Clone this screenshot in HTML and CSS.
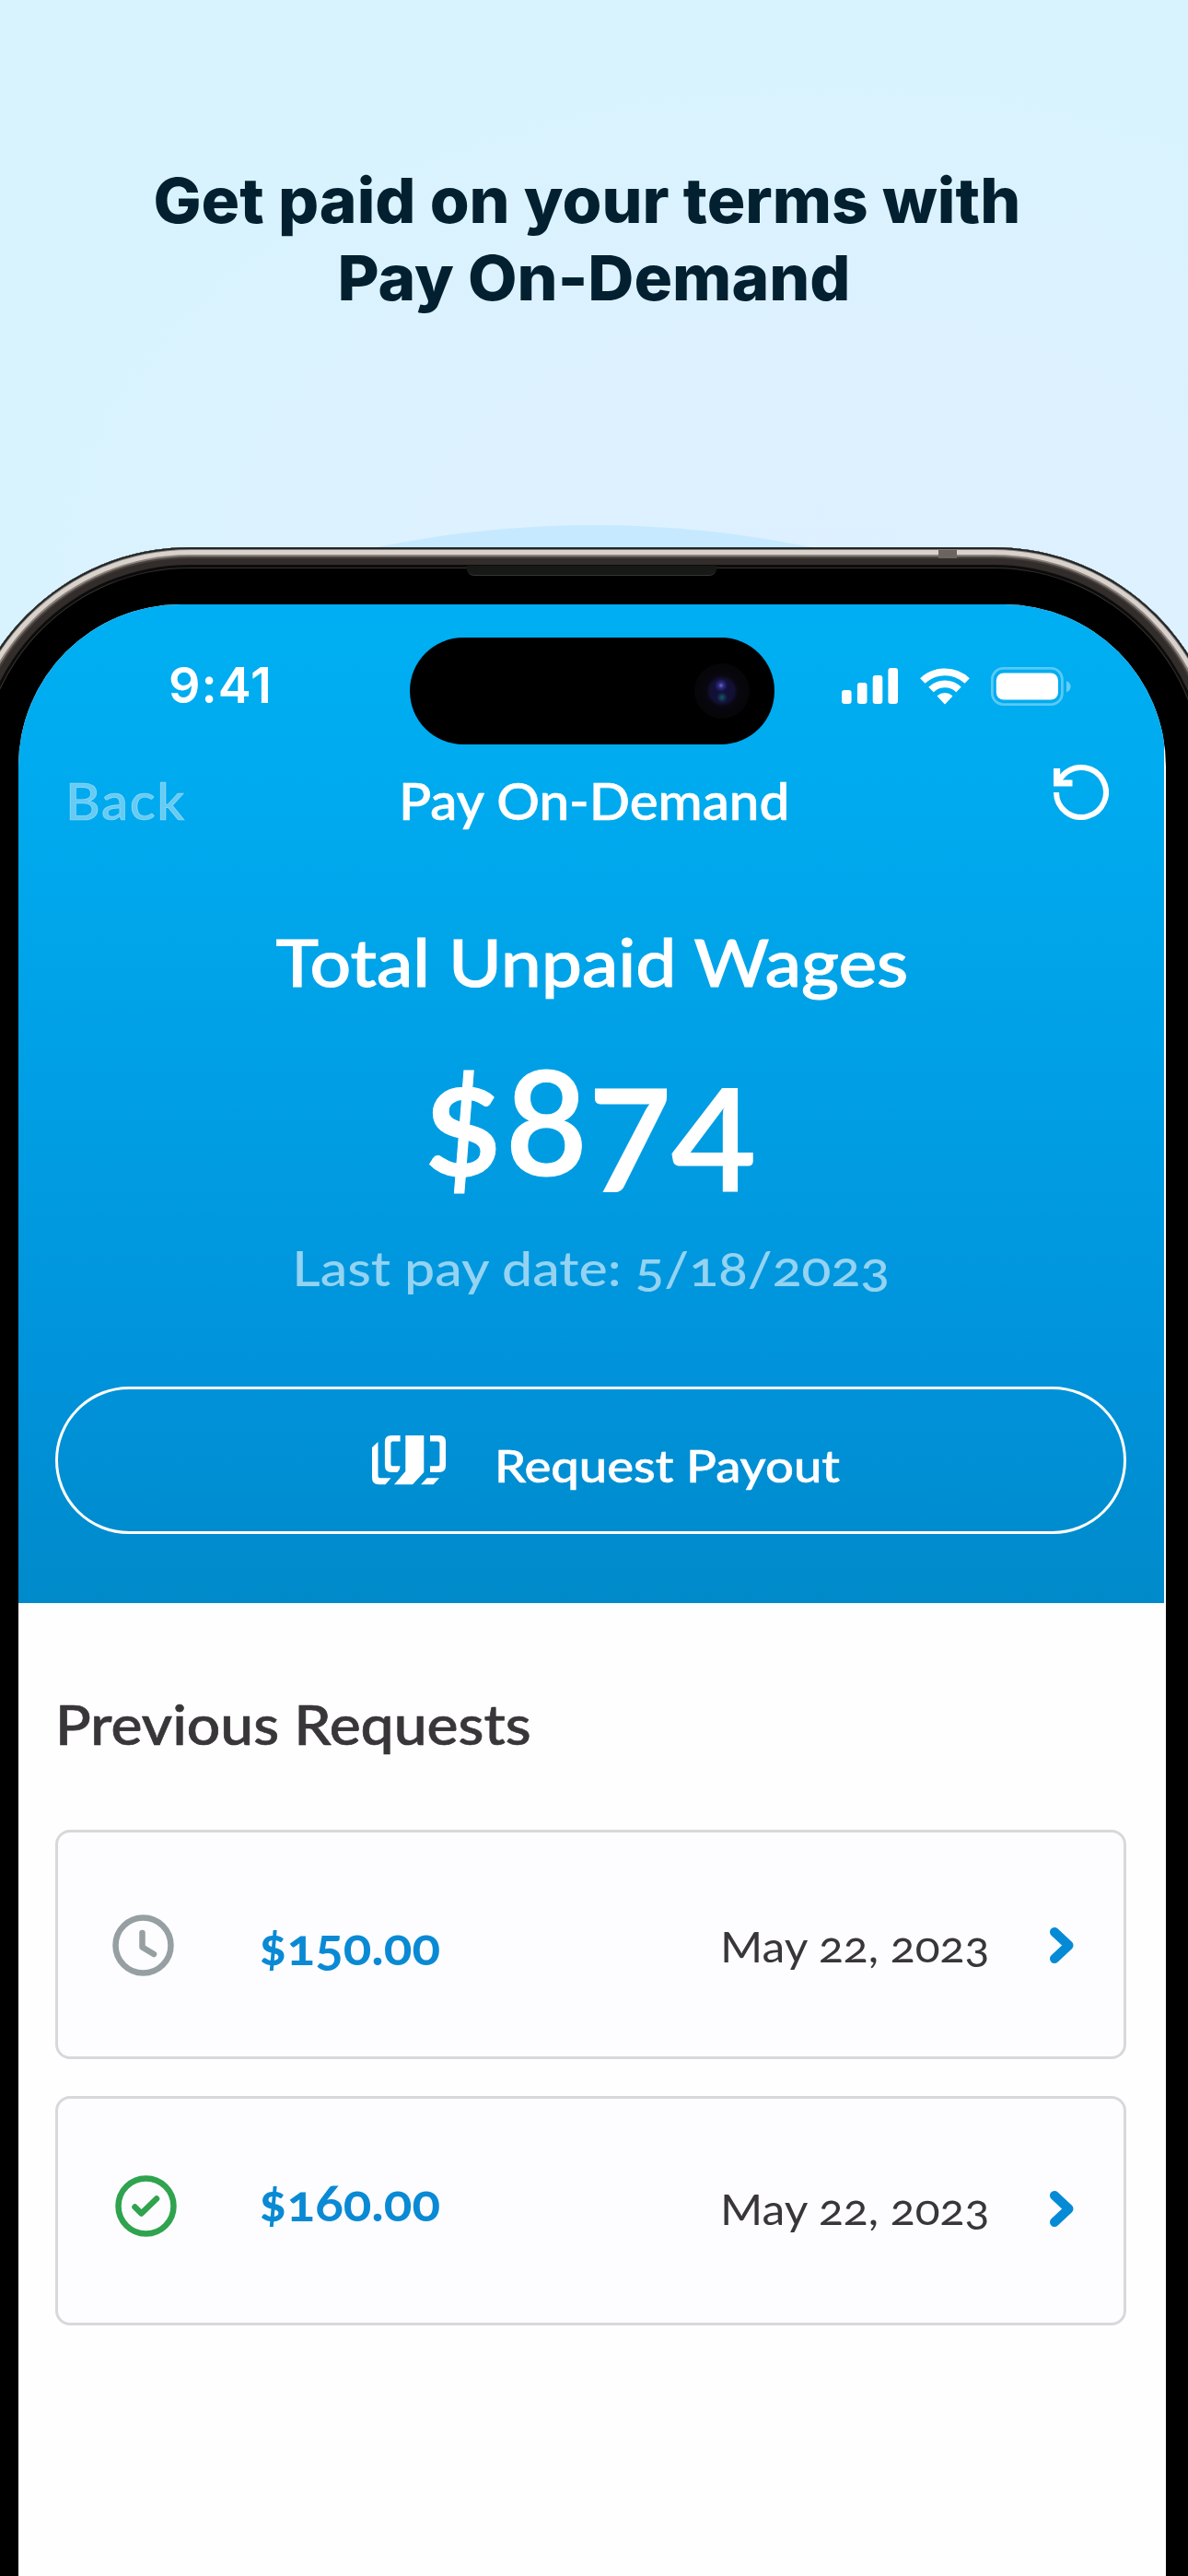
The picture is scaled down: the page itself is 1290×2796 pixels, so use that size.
FILE: index.html
```html
<!DOCTYPE html>
<html lang="en">
<head>
  <meta charset="UTF-8">
  <meta name="viewport" content="width=device-width, initial-scale=1.0">
  <title>Pay On-Demand</title>
  <link rel="stylesheet" href="styles.css">
</head>
<body>
  <div class="promo">
    <h1 class="headline">
      <span class="line-one">Get paid on your terms with</span>
      <span class="line-two">Pay On-Demand</span>
    </h1>

    <div class="glow"></div>

    <div class="phone">
      <div class="antenna"></div>
      <div class="speaker"></div>

      <div class="screen">
        <!-- blue header -->
        <div class="hero">
          <div class="status-bar">
            <span class="time">9:41</span>
            <div class="island">
              <div class="camera"></div>
            </div>
            <div class="status-icons">
              <svg class="signal" width="61" height="39" viewBox="0 0 61 39" fill="#fff">
                <rect x="0" y="24" width="10.6" height="15" rx="3"/>
                <rect x="16.9" y="16" width="10.6" height="23" rx="3"/>
                <rect x="33.7" y="8" width="10.6" height="31" rx="3"/>
                <rect x="50.4" y="0" width="10.6" height="39" rx="3"/>
              </svg>
              <svg class="wifi" width="54" height="40" viewBox="0 0 54 40" fill="none" stroke="#fff">
                <path d="M2.8 14A35 35 0 0 1 51.2 14" stroke-width="7.8"/>
                <path d="M12 23.5A21.4 21.4 0 0 1 42 23.5" stroke-width="7.8"/>
                <path d="M27 38.5L19.5 30.5A11.5 11.5 0 0 1 34.5 30.5Z" fill="#fff" stroke-width="1.5" stroke-linejoin="round"/>
              </svg>
              <svg class="battery" width="87" height="42" viewBox="0 0 87 42">
                <rect x="1.4" y="1.4" width="76" height="39.2" rx="12" fill="none" stroke="#fff" stroke-opacity=".35" stroke-width="2.8"/>
                <rect x="5.8" y="6.5" width="67.2" height="29" rx="8" fill="#fff"/>
                <path d="M82 15Q86.6 17 86.6 21.3T82 27.5Z" fill="#fff" fill-opacity=".4"/>
              </svg>
            </div>
          </div>

          <div class="nav">
            <a class="back"><span>Back</span></a>
            <div class="nav-title"><span>Pay On-Demand</span></div>
            <svg class="refresh" width="60" height="60" viewBox="0 0 60 60" fill="none" stroke="#fff">
              <path d="M3 30A27 27 0 1 0 11.5 10.3Q8 13.5 5.5 18.5" stroke-width="6"/>
              <path d="M3.6 4V20H20.5" stroke-width="7.2"/>
            </svg>
          </div>

          <h2 class="wages-label">Total Unpaid Wages</h2>
          <div class="wages">$874</div>
          <div class="pay-date">Last pay date: 5/18/2023</div>

          <button class="payout">
            <svg width="80" height="54" viewBox="0 0 80 54" fill="#fff">
              <path d="M0 13L6.5 7V44Q6.5 46.3 9 46.3H20.5L14.5 53.3H7Q0 53.3 0 46Z"/>
              <path d="M30.6 0H21Q13.9 0 13.9 7V33Q13.9 40 21 40H27.5Q30.6 37 30.6 33.3H22.4Q20.4 33.3 20.4 31.3V8.5Q20.4 6.5 22.4 6.5H30.6Z"/>
              <path d="M36.3 0H56.3V40L44 53.3H24L36.3 39Z"/>
              <path d="M63 0H73Q80 0 80 7V33Q80 40 73 40H63V33.3H71.4Q73.4 33.3 73.4 31.3V8.5Q73.4 6.5 71.4 6.5H63Z"/>
              <path d="M53 53.3L59.6 46.3H73L66.5 53.3Z"/>
            </svg>
            <span>Request Payout</span>
          </button>
        </div>

        <!-- request list -->
        <div class="requests">
          <h3>Previous Requests</h3>

          <div class="request pending">
            <svg class="state" width="67" height="67" viewBox="0 0 67 67" fill="none" stroke="#969fa2" stroke-width="6.5" stroke-linecap="round" stroke-linejoin="round">
              <circle cx="33.5" cy="33.5" r="30"/>
              <path d="M32.5 20V35.5L45 43"/>
            </svg>
            <span class="amount">$150.00</span>
            <span class="date">May 22, 2023</span>
            <svg class="chevron" width="28" height="41" viewBox="0 0 28 41" fill="none" stroke="#058bd6" stroke-width="10" stroke-linecap="round" stroke-linejoin="round">
              <path d="M6 6L21.5 20.5L6 35"/>
            </svg>
          </div>

          <div class="request done">
            <svg class="state" width="67" height="67" viewBox="0 0 67 67" fill="none" stroke="#2fa34e" stroke-width="6.5" stroke-linecap="round" stroke-linejoin="round">
              <circle cx="33.5" cy="33.5" r="30"/>
              <path d="M21.5 34.5L28.5 41.5L45 25.5"/>
            </svg>
            <span class="amount">$160.00</span>
            <span class="date">May 22, 2023</span>
            <svg class="chevron" width="28" height="41" viewBox="0 0 28 41" fill="none" stroke="#058bd6" stroke-width="10" stroke-linecap="round" stroke-linejoin="round">
              <path d="M6 6L21.5 20.5L6 35"/>
            </svg>
          </div>
        </div>
      </div>
    </div>
  </div>
</body>
</html>
```
FILE: styles.css
```css
* {
  box-sizing: border-box;
}

body {
  margin: 0;
  font-family: Lato, "Liberation Sans", sans-serif;
  font-variant-numeric: oldstyle-nums;
}

h1, h2, h3 {
  margin: 0;
  font-weight: 500;
}

.promo {
  position: relative;
  width: 1290px;
  height: 2796px;
  padding-top: 175px;
  overflow: hidden;
  background: radial-gradient(ellipse 860px 560px at 900px 640px, #def0ff 0, #ddf1ff 50%, #d9f3fe 100%);
}

.headline {
  display: flex;
  flex-direction: column;
  align-items: center;
  margin-bottom: 251px;
  font-family: Inter, "Liberation Sans", sans-serif;
  font-size: 68px;
  font-weight: 800;
  line-height: 84px;
  color: #032030;
  transform: scaleX(1.02);
}

.line-one {
  margin-right: 15px;
}

/* big circle peeking out behind the phone */
.glow {
  position: absolute;
  top: 570px;
  left: -527px;
  width: 2344px;
  height: 2344px;
  border-radius: 50%;
  background: #c6e9ff;
}

/* phone */
.phone {
  position: relative;
  width: 1373px;
  height: 2300px;
  margin-left: -44px;
  padding: 62px 63.5px 0 64px;
  border-radius: 250px 250px 0 0;
  background: #000;
  box-shadow:
    inset 0 0 0 2px #20272a,
    inset 0 0 0 3px #857d79,
    inset 0 0 0 8px #d9d1cc,
    inset 0 0 0 10px #8a817b,
    inset 0 0 0 12px #4a4440,
    inset 0 0 0 19px #322d2a,
    inset 0 0 0 22px #0d0c0c,
    inset 0 0 0 23px #343331;
}

.antenna {
  position: absolute;
  top: 3px;
  left: 1063px;
  width: 20px;
  height: 9px;
  background: #6b645f;
}

.speaker {
  position: absolute;
  top: 20px;
  left: 551px;
  width: 271px;
  height: 11px;
  background: #171916;
  border-bottom: 1px solid #343632;
  border-radius: 0 0 8px 8px;
}

.screen {
  height: 2238px;
  overflow: hidden;
  border-radius: 176px 176px 0 0;
  background: #fefefe;
}

.hero {
  width: 1243.5px;
  height: 1084px;
  padding-top: 36px;
  background: linear-gradient(#00aff3, #00a9ed 22%, #009ee4 50%, #0092da 78%, #008aca);
  color: #fff;
}

/* status bar */
.status-bar {
  display: flex;
  align-items: center;
  height: 116px;
  padding-left: 163px;
}

.time {
  width: 261.7px;
  margin-bottom: 14px;
  font-family: Inter, "Liberation Sans", sans-serif;
  font-size: 54px;
  font-weight: 600;
  font-variant-numeric: normal;
  letter-spacing: 1px;
}

.island {
  display: flex;
  align-items: center;
  justify-content: flex-end;
  width: 396px;
  height: 116px;
  padding-right: 27px;
  border-radius: 58px;
  background: #000;
}

.camera {
  width: 60px;
  height: 60px;
  border-radius: 50%;
  background:
    radial-gradient(circle at 29px 24px, #6a6bc0 0, #2c2a80 3px, transparent 7px),
    radial-gradient(circle at 30px 37px, #175a66 0, #123050 3px, transparent 6px),
    radial-gradient(circle, #110f3a 0, #131036 13px, #09070f 17px, #060507 30px);
}

.status-icons {
  display: flex;
  align-items: center;
  margin: 0 0 11px 73px;
}

.wifi {
  margin-left: 24px;
}

.battery {
  margin-left: 23px;
}

/* nav */
.nav {
  display: flex;
  align-items: center;
  height: 64px;
  margin-top: 29px;
  padding-left: 51px;
  font-size: 55px;
  font-weight: 500;
  line-height: 64px;
}

.nav span {
  display: inline-block;
  transform: scaleX(1.06);
  transform-origin: left;
  -webkit-text-stroke: .7px;
}

.back {
  width: 362px;
  letter-spacing: 1.5px;
  color: rgba(255, 255, 255, .4);
}

.nav-title {
  width: 710.5px;
}

.refresh {
  margin-bottom: 19px;
}

/* wages */
.wages-label,
.wages,
.pay-date {
  text-align: center;
}

.wages-label {
  margin-top: 100px;
  padding-left: 2px;
  font-size: 72px;
  line-height: 84px;
  transform: scaleX(1.092);
  -webkit-text-stroke: 1px;
}

.wages {
  margin-top: 31px;
  padding-right: 6px;
  font-size: 168px;
  font-weight: 600;
  line-height: 190px;
  -webkit-text-stroke: 1px;
}

.pay-date {
  margin-top: 38px;
  font-size: 53px;
  font-weight: 500;
  line-height: 64px;
  color: rgba(255, 255, 255, .58);
  transform: scaleX(1.113);
}

.payout {
  display: flex;
  align-items: center;
  gap: 53px;
  width: 1163.5px;
  height: 160px;
  margin: 96.5px 0 0 39.6px;
  padding: 0 0 0 341px;
  border: 3.5px solid #fff;
  border-radius: 80px;
  background: none;
  color: #fff;
  font: inherit;
  font-size: 49px;
  font-weight: 500;
}

.payout span {
  padding-top: 10px;
  transform: scaleX(1.11);
  transform-origin: left;
  -webkit-text-stroke: .6px;
}

/* request list */
.requests {
  padding: 97px 42.5px 0 39.6px;
}

.requests h3 {
  margin-bottom: 79px;
  font-size: 59px;
  line-height: 70px;
  color: #39363a;
  transform: scaleX(1.088);
  transform-origin: left;
  -webkit-text-stroke: .7px;
}

.request {
  display: grid;
  grid-template-columns: 159.6px 501px 357px 28px;
  align-items: center;
  height: 249px;
  margin-bottom: 40px;
  padding: 2px 0 0 59px;
  border: 3px solid #d9d7dc;
  border-radius: 16px;
  background: #fdfcfe;
}

.amount {
  font-size: 55px;
  font-weight: 700;
  color: #0a8ad4;
  transform: scaleX(1.03);
  transform-origin: left;
}

.date {
  font-size: 47px;
  color: #38363a;
  transform: scaleX(1.06);
  transform-origin: left;
}

.done .state {
  margin: 0 0 13px 3.5px;
}

.done .amount {
  margin-bottom: 21px;
}

.done .date,
.done .chevron {
  margin-bottom: 7px;
}
```
